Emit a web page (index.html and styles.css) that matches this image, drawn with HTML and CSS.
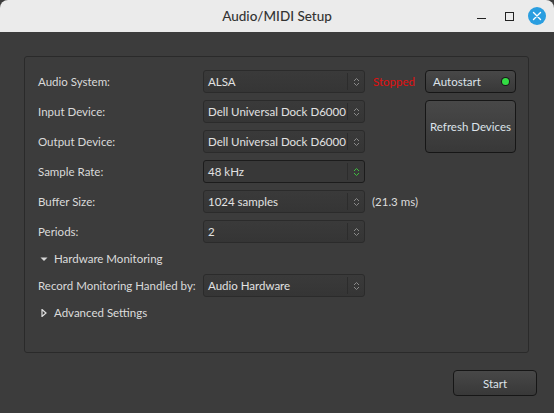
FILE: index.html
```html
<!DOCTYPE html>
<html>
<head>
<meta charset="utf-8">
<link rel="stylesheet" href="styles.css">
</head>
<body>
<div class="window">
  <div class="titlebar">
    <div class="title">Audio/MIDI Setup</div>
    <div class="wm">
      <span class="wm-min"></span>
      <span class="wm-max"></span>
      <span class="wm-close">
        <svg width="18" height="18" viewBox="0 0 18 18"><path d="M5.5 5.5 L12.5 12.5 M12.5 5.5 L5.5 12.5" stroke="#fff" stroke-width="1.4" fill="none" stroke-linecap="round"/></svg>
      </span>
    </div>
  </div>
  <div class="content">
    <div class="frame">
      <div class="grid">
        <div class="label r1">Audio System:</div>
        <div class="combo r1"><span class="val">ALSA</span><span class="arrows"><svg width="7" height="10" viewBox="0 0 7 10"><path d="M1 4 L3.5 1.5 L6 4 M1 6 L3.5 8.5 L6 6" stroke="currentColor" fill="none" stroke-width="1"/></svg></span></div>
        <div class="status r1">Stopped</div>
        <button class="btn autostart r1">Autostart<span class="led"></span></button>

        <div class="label r2">Input Device:</div>
        <div class="combo r2"><span class="val">Dell Universal Dock D6000</span><span class="arrows"><svg width="7" height="10" viewBox="0 0 7 10"><path d="M1 4 L3.5 1.5 L6 4 M1 6 L3.5 8.5 L6 6" stroke="currentColor" fill="none" stroke-width="1"/></svg></span></div>
        <button class="btn refresh">Refresh Devices</button>

        <div class="label r3">Output Device:</div>
        <div class="combo r3"><span class="val">Dell Universal Dock D6000</span><span class="arrows"><svg width="7" height="10" viewBox="0 0 7 10"><path d="M1 4 L3.5 1.5 L6 4 M1 6 L3.5 8.5 L6 6" stroke="currentColor" fill="none" stroke-width="1"/></svg></span></div>

        <div class="label r4">Sample Rate:</div>
        <div class="combo focus r4"><span class="val">48 kHz</span><span class="arrows"><svg width="7" height="10" viewBox="0 0 7 10"><path d="M1 4 L3.5 1.5 L6 4 M1 6 L3.5 8.5 L6 6" stroke="currentColor" fill="none" stroke-width="1"/></svg></span></div>

        <div class="label r5">Buffer Size:</div>
        <div class="combo r5"><span class="val">1024 samples</span><span class="arrows"><svg width="7" height="10" viewBox="0 0 7 10"><path d="M1 4 L3.5 1.5 L6 4 M1 6 L3.5 8.5 L6 6" stroke="currentColor" fill="none" stroke-width="1"/></svg></span></div>
        <div class="extra r5">(21.3 ms)</div>

        <div class="label r6">Periods:</div>
        <div class="combo r6"><span class="val">2</span><span class="arrows"><svg width="7" height="10" viewBox="0 0 7 10"><path d="M1 4 L3.5 1.5 L6 4 M1 6 L3.5 8.5 L6 6" stroke="currentColor" fill="none" stroke-width="1"/></svg></span></div>

        <div class="expander r7"><svg class="tri" width="8" height="8" viewBox="0 0 8 8"><path d="M0.5 2.5 L7.5 2.5 L4 6 Z" fill="#d8d8d8"/></svg>Hardware Monitoring</div>

        <div class="label r8">Record Monitoring Handled by:</div>
        <div class="combo r8"><span class="val">Audio Hardware</span><span class="arrows"><svg width="7" height="10" viewBox="0 0 7 10"><path d="M1 4 L3.5 1.5 L6 4 M1 6 L3.5 8.5 L6 6" stroke="currentColor" fill="none" stroke-width="1"/></svg></span></div>

        <div class="expander r9"><svg class="tri" width="8" height="8" viewBox="0 0 8 8"><path d="M2 0.5 L6 4 L2 7.5 Z" fill="none" stroke="#e0e0e0" stroke-width="1.2"/></svg>Advanced Settings</div>
      </div>
    </div>
    <div class="footer">
      <button class="btn start">Start</button>
    </div>
  </div>
</div>
</body>
</html>
```
FILE: styles.css
```css
* { box-sizing: border-box; }
html, body { margin: 0; padding: 0; }
body {
  width: 554px;
  height: 413px;
  overflow: hidden;
  background: #3c3c3c;
  font-family: "Lato", "Noto Sans", sans-serif;
  font-size: 11.5px;
  color: #dcdcdc;
}
.window { width: 554px; height: 413px; display: flex; flex-direction: column; }
.titlebar {
  height: 32px;
  background: #ebebeb;
  border-radius: 8px 8px 0 0;
  display: flex;
  align-items: center;
  justify-content: center;
  position: relative;
}
.title { font-size: 13.5px; color: #333; font-weight: 500; }
.wm {
  position: absolute;
  right: 0;
  top: 0;
  height: 32px;
  display: flex;
  align-items: center;
}
.wm-min { width: 9px; height: 1.5px; background: #222; margin-top: 5px; margin-right: 19px; }
.wm-max { width: 9px; height: 9px; border: 1.5px solid #222; margin-right: 14px; }
.wm-close {
  width: 18px; height: 18px; border-radius: 50%;
  background: #2a9ee0;
  display: flex; align-items: center; justify-content: center;
  margin-right: 8px;
}
.content { flex: 1; padding: 24px 25px 0 24px; display: flex; flex-direction: column; }
.frame {
  height: 297px;
  border: 1px solid #2a2a2a;
  border-radius: 3px;
  padding: 13px 13px 0 13px;
}
.grid {
  display: grid;
  grid-template-columns: 165px 162px 60px 91px;
  grid-template-rows: 23px 23px 23px 23px 23px 23px 17px 23px 17px;
  row-gap: 7px;
  align-items: center;
}
.r1 { grid-row: 1; } .r2 { grid-row: 2; } .r3 { grid-row: 3; }
.r4 { grid-row: 4; } .r5 { grid-row: 5; } .r6 { grid-row: 6; }
.r7 { grid-row: 7; } .r8 { grid-row: 8; } .r9 { grid-row: 9; }
.label { grid-column: 1; color: #dadada; }
.combo {
  grid-column: 2;
  height: 23px;
  border: 1px solid #2b2b2b;
  border-radius: 3px;
  background: linear-gradient(#3a3a3a, #353535);
  display: flex;
  align-items: center;
  color: #e2e2e2;
}
.combo.focus { border-color: #1c1c1c; background: #383838; }
.combo .val { flex: 1; padding-left: 4px; white-space: nowrap; overflow: hidden; }
.combo .arrows {
  width: 17px;
  height: 17px;
  border-left: 1px solid #2c2c2c;
  display: flex;
  align-items: center;
  justify-content: center;
  color: #8a8a8a;
}
.combo.focus .arrows { color: #3fbf3f; }
.status { grid-column: 3; color: #e01010; padding-left: 8px; }
.extra { grid-column: 3; padding-left: 7px; white-space: nowrap; }
.btn {
  font-family: inherit;
  font-size: 11.5px;
  color: #dde3ea;
  background: linear-gradient(#484848, #383838);
  border: 1px solid #161616;
  border-radius: 4px;
  padding: 0;
}
.autostart {
  grid-column: 4;
  height: 23px;
  display: flex;
  align-items: center;
  justify-content: space-between;
  padding: 0 6px 0 7px;
  text-align: left;
}
.led {
  width: 7px; height: 7px; border-radius: 50%;
  background: #33dd44;
  box-shadow: 0 0 0 1px #1a1a1a;
}
.refresh {
  grid-column: 4;
  grid-row: 2 / span 2;
  align-self: stretch;
  height: 53px;
}
.expander {
  grid-column: 1 / span 2;
  display: flex;
  align-items: center;
  padding-left: 2px;
}
.tri { margin-right: 6px; }
.footer {
  display: flex;
  justify-content: flex-end;
  padding-top: 17px;
  margin-right: -8px;
}
.start { width: 84px; height: 26px; }
```
